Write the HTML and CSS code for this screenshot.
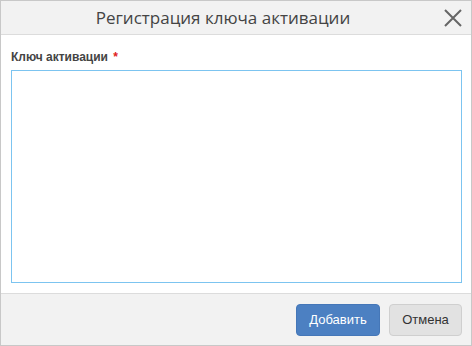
FILE: index.html
```html
<!DOCTYPE html>
<html lang="ru">
<head>
    <meta charset="UTF-8">
    <title>Регистрация ключа активации</title>
    <link rel="stylesheet" href="styles.css">
</head>
<body>
    <div class="dialog">
        <div class="dialog-header">
            <span class="dialog-title">Регистрация ключа активации</span>
            <button class="close-btn" aria-label="Закрыть">
                <svg width="20" height="20" viewBox="0 0 20 20">
                    <path d="M2 2 L18 18 M18 2 L2 18" stroke="#666" stroke-width="2" fill="none"/>
                </svg>
            </button>
        </div>
        <div class="dialog-body">
            <label class="field-label" for="key">Ключ активации <span class="required">*</span></label>
            <textarea id="key" class="key-input"></textarea>
        </div>
        <div class="dialog-footer">
            <button class="btn btn-primary">Добавить</button>
            <button class="btn btn-default">Отмена</button>
        </div>
    </div>
</body>
</html>
```

FILE: styles.css
```css
body {
    margin: 0;
    padding: 0;
    background: #fff;
    font-family: 'Liberation Sans', Arial, sans-serif;
}
.dialog {
    width: 470px;
    height: 344px;
    border: 1px solid #c8c8c8;
    display: flex;
    flex-direction: column;
    background: #fff;
}
.dialog-header {
    height: 33px;
    background: #f2f2f2;
    border-bottom: 1px solid #dcdcdc;
    display: flex;
    align-items: center;
    justify-content: center;
    padding-right: 26px;
    position: relative;
}
.dialog-title {
    font-family: 'Open Sans', sans-serif;
    font-size: 17px;
    color: #444;
}
.close-btn {
    position: absolute;
    right: 7px;
    top: 6px;
    width: 22px;
    height: 22px;
    padding: 1px;
    border: none;
    background: none;
    cursor: pointer;
}
.dialog-body {
    flex: 1;
    padding: 15px 9px 10px 10px;
    display: flex;
    flex-direction: column;
}
.field-label {
    font-size: 12px;
    font-weight: bold;
    color: #444;
    margin-bottom: 6px;
}
.required {
    color: #e02020;
    margin-left: 2px;
}
.key-input {
    height: 213px;
    border: 1px solid #7cc4f0;
    outline: none;
    resize: none;
    padding: 4px;
    box-sizing: border-box;
    font-family: inherit;
}
.dialog-footer {
    height: 51px;
    flex-shrink: 0;
    background: #f2f2f2;
    border-top: 1px solid #dcdcdc;
    display: flex;
    align-items: center;
    justify-content: flex-end;
    gap: 9px;
    padding-right: 9px;
}
.btn {
    height: 32px;
    border-radius: 4px;
    font-family: 'Liberation Sans', Arial, sans-serif;
    font-size: 13px;
    cursor: pointer;
}
.btn-primary {
    width: 84px;
    background: #4c80c2;
    border: 1px solid #4577b8;
    color: #fff;
}
.btn-default {
    width: 73px;
    background: #e2e2e2;
    border: 1px solid #cfcfcf;
    color: #333;
}
```
